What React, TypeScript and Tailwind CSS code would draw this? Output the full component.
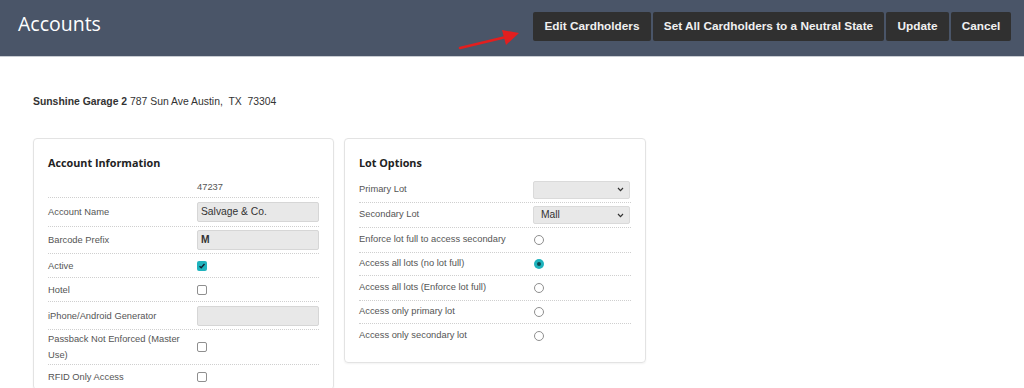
import React from "react";

const label = "text-[9.33px] text-[#555] font-['Liberation_Sans',Arial,sans-serif]";

function Check({ checked }: { checked?: boolean }) {
  if (checked) {
    return (
      <span className="flex h-[10px] w-[10px] items-center justify-center rounded-[2px] bg-[#1fb3bd]">
        <svg width="8" height="8" viewBox="0 0 8 8">
          <path d="M1.5 4.2 L3.2 5.8 L6.5 2" fill="none" stroke="#123" strokeWidth="1.4" />
        </svg>
      </span>
    );
  }
  return <span className="block h-[10px] w-[10px] rounded-[2px] border border-[#8f8f8f] bg-white" />;
}

function Radio({ checked }: { checked?: boolean }) {
  if (checked) {
    return (
      <span className="flex h-[10px] w-[10px] items-center justify-center rounded-full bg-[#1fb3bd]">
        <span className="block h-[4px] w-[4px] rounded-full bg-[#0d4a50]" />
      </span>
    );
  }
  return <span className="block h-[10px] w-[10px] rounded-full border border-[#8f8f8f] bg-white" />;
}

function Input({ value, bold }: { value?: string; bold?: boolean }) {
  return (
    <div
      className={`flex h-[20px] w-[122px] items-center rounded-[2px] border border-[#d6d6d6] bg-[#e8e8e8] pl-[3px] text-[10.3px] text-[#333] font-['Liberation_Sans',Arial,sans-serif] ${bold ? "font-bold" : ""}`}
    >
      {value}
    </div>
  );
}

function Select({ value }: { value?: string }) {
  return (
    <div className="flex h-[18px] w-[97px] items-center justify-between rounded-[2px] border border-[#dadada] bg-[#e8e8e8] pl-[7px] pr-[5px] text-[10.3px] text-[#333] font-['Liberation_Sans',Arial,sans-serif]">
      <span>{value}</span>
      <svg width="7" height="5" viewBox="0 0 7 5">
        <path d="M1 1 L3.5 3.6 L6 1" fill="none" stroke="#333" strokeWidth="1.2" />
      </svg>
    </div>
  );
}

function Row1({ h, name, children }: { h: string; name?: React.ReactNode; children?: React.ReactNode }) {
  return (
    <div className={`flex items-center ${h} border-b border-dotted border-[#cfcfcf]`}>
      <div className={`w-[149px] shrink-0 pr-2 leading-[16px] ${label}`}>{name}</div>
      <div className="flex flex-1 items-center">{children}</div>
    </div>
  );
}

function Row2({ h, name, children, last }: { h: string; name?: React.ReactNode; children?: React.ReactNode; last?: boolean }) {
  return (
    <div className={`flex items-center ${h} ${last ? "" : "border-b border-dotted border-[#cfcfcf]"}`}>
      <div className={`w-[174px] shrink-0 ${label}`}>{name}</div>
      <div className="flex flex-1 items-center">{children}</div>
    </div>
  );
}

export default function App() {
  return (
    <div className="relative h-[388px] w-[1024px] overflow-hidden bg-white">
      <header className="flex h-[57px] items-start justify-between border-b border-[#c8ccd2] bg-[#4a5568] pl-[18px] pr-[13px]">
        <h1 className="pt-[10px] text-[19.5px] leading-[28px] text-white font-['Open_Sans',sans-serif]">Accounts</h1>
        <div className="flex gap-[2px] pt-[12px] font-['Liberation_Sans',Arial,sans-serif] text-[11.8px] font-bold text-[#f0f0f0]">
          <button className="h-[29px] w-[118px] rounded-[2px] bg-[#303030]">Edit Cardholders</button>
          <button className="h-[29px] w-[231px] rounded-[2px] bg-[#303030]">Set All Cardholders to a Neutral State</button>
          <button className="h-[29px] w-[63px] rounded-[2px] bg-[#303030]">Update</button>
          <button className="h-[29px] w-[60px] rounded-[2px] bg-[#303030]">Cancel</button>
        </div>
      </header>

      <svg className="absolute left-[455px] top-[26px]" width="70" height="28" viewBox="455 26 70 28">
        <line x1="460" y1="48" x2="506" y2="37" stroke="#e21f1f" strokeWidth="2.5" strokeLinecap="round" />
        <polygon points="519,33 502,30 506,45" fill="#e21f1f" />
      </svg>

      <div className="px-[33px]">
        <p className="mt-[38px] text-[10.4px] leading-[14px] text-[#333] font-['Liberation_Sans',Arial,sans-serif]">
          <span className="font-bold">Sunshine Garage 2</span> 787 Sun Ave Austin,&nbsp; TX&nbsp; 73304
        </p>

        <div className="mt-[29px] flex items-start gap-[10px]">
          <section className="w-[301px] rounded-[4px] border border-[#e3e3e3] px-[14px] pt-[15px] shadow-[0_1px_2px_rgba(0,0,0,0.05)]">
            <h2 className="mb-[7px] text-[10.8px] font-bold leading-[17px] text-[#222] font-['Open_Sans',sans-serif]">Account Information</h2>
            <Row1 h="h-[20px]">
              <span className={label}>47237</span>
            </Row1>
            <Row1 h="h-[29px]" name="Account Name">
              <Input value="Salvage & Co." />
            </Row1>
            <Row1 h="h-[27px]" name="Barcode Prefix">
              <Input value="M" bold />
            </Row1>
            <Row1 h="h-[24px]" name="Active">
              <Check checked />
            </Row1>
            <Row1 h="h-[24px]" name="Hotel">
              <Check />
            </Row1>
            <Row1 h="h-[28px]" name="iPhone/Android Generator">
              <Input />
            </Row1>
            <Row1 h="h-[35px]" name="Passback Not Enforced (Master Use)">
              <Check />
            </Row1>
            <Row1 h="h-[24px]" name="RFID Only Access">
              <Check />
            </Row1>
          </section>

          <section className="w-[302px] rounded-[4px] border border-[#e3e3e3] px-[14px] pb-[14px] pt-[15px] shadow-[0_1px_2px_rgba(0,0,0,0.05)]">
            <h2 className="mb-[6px] text-[10.8px] font-bold leading-[17px] text-[#222] font-['Open_Sans',sans-serif]">Lot Options</h2>
            <Row2 h="h-[26px]" name="Primary Lot">
              <Select />
            </Row2>
            <Row2 h="h-[25px]" name="Secondary Lot">
              <Select value="Mall" />
            </Row2>
            <Row2 h="h-[25px]" name="Enforce lot full to access secondary">
              <span className="ml-[1px]"><Radio /></span>
            </Row2>
            <Row2 h="h-[23px]" name="Access all lots (no lot full)">
              <span className="ml-[1px]"><Radio checked /></span>
            </Row2>
            <Row2 h="h-[25px]" name="Access all lots (Enforce lot full)">
              <span className="ml-[1px]"><Radio /></span>
            </Row2>
            <Row2 h="h-[23px]" name="Access only primary lot">
              <span className="ml-[1px]"><Radio /></span>
            </Row2>
            <Row2 h="h-[24px]" name="Access only secondary lot" last>
              <span className="ml-[1px]"><Radio /></span>
            </Row2>
          </section>
        </div>
      </div>
    </div>
  );
}
